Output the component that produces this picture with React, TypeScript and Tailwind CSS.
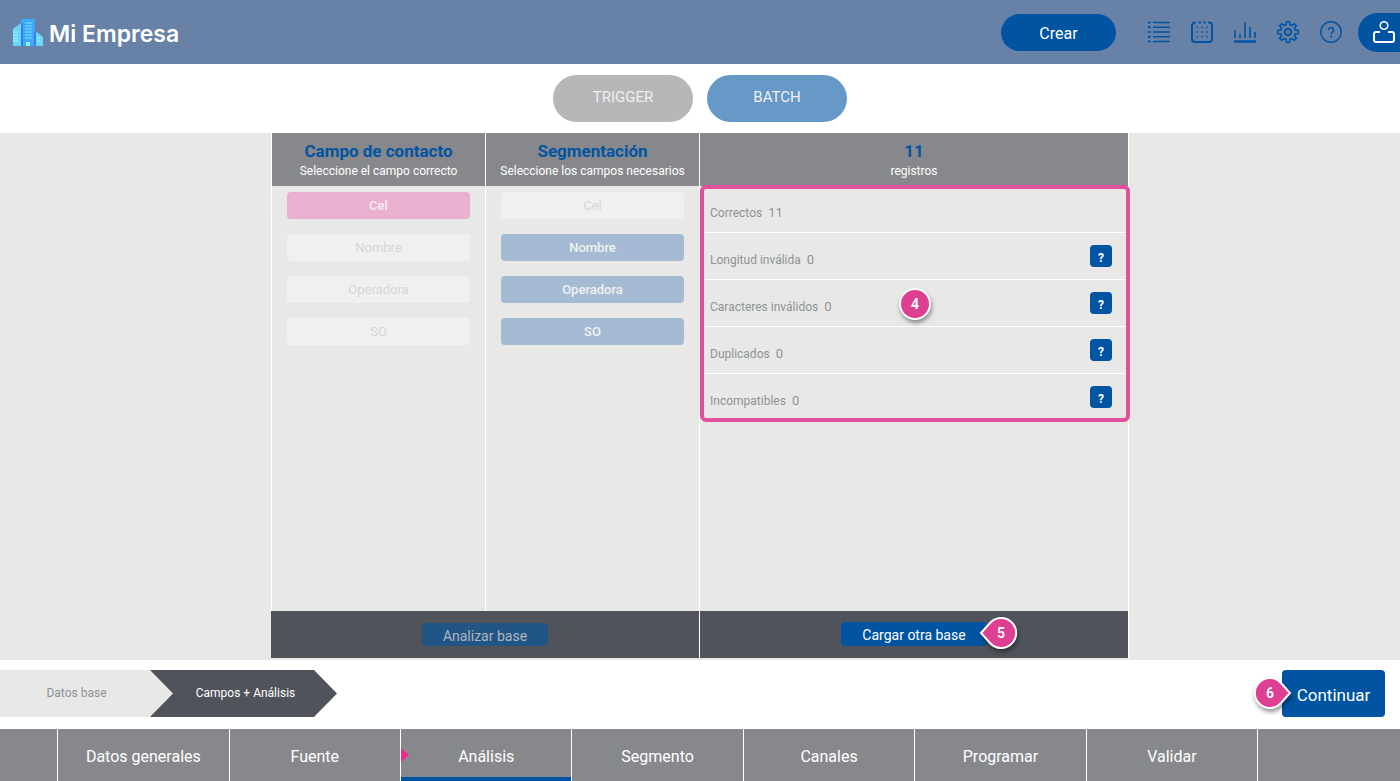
import { type ReactNode } from 'react'
import clsx from 'clsx'

const fields = ['Cel', 'Nombre', 'Operadora', 'SO']

const stats = [
  { label: 'Correctos', value: 11, help: false },
  { label: 'Longitud inválida', value: 0, help: true },
  { label: 'Caracteres inválidos', value: 0, help: true },
  { label: 'Duplicados', value: 0, help: true },
  { label: 'Incompatibles', value: 0, help: true },
]

const sections = ['Datos generales', 'Fuente', 'Análisis', 'Segmento', 'Canales', 'Programar', 'Validar']

function Logo() {
  return (
    <svg viewBox="0 0 30 27" className="w-[30px] h-[27px]" aria-hidden="true">
      <path d="M0 10 8 4v23H0z" fill="#6ad6fc" />
      <path d="M22 12l8 6v9h-8z" fill="#6ad6fc" />
      <path d="M8 0h14v27H8z" fill="#3fa9fb" />
      <path d="M8 4h2v23H8zM21 12h2v15h-2z" fill="#3b7df0" />
      <path d="M12 4h7M12 7h7M12 10h7M12 13h7M12 16h7M12 19h7" stroke="#74e2ff" />
      <path d="M0 13h5M0 16h5M0 19h5M0 22h5M24 19h3M24 22h3" stroke="#a8f0ff" />
      <path d="M13 23h4v4h-4z" fill="#8ff0ff" />
    </svg>
  )
}

function Icon({ children }: { children: ReactNode }) {
  return (
    <svg viewBox="0 0 22 22" className="w-[22px] h-[22px]" fill="none" stroke="currentColor" strokeWidth="1.4" aria-hidden="true">
      {children}
    </svg>
  )
}

function GearIcon() {
  const teeth = 8
  const points: string[] = []
  for (let i = 0; i < teeth; i++) {
    const a = (i * 360) / teeth
    const steps: [number, number][] = [[-13, 7.6], [-9, 10.4], [9, 10.4], [13, 7.6]]
    steps.forEach(([offset, r]) => {
      const rad = ((a + offset) * Math.PI) / 180
      points.push(`${(11 + r * Math.sin(rad)).toFixed(2)},${(11 - r * Math.cos(rad)).toFixed(2)}`)
    })
  }
  return (
    <Icon>
      <polygon points={points.join(' ')} strokeLinejoin="round" strokeWidth="1.6" />
      <circle cx="11" cy="11" r="3.2" strokeWidth="2" />
    </Icon>
  )
}

const tools = [
  {
    label: 'Lista',
    icon: (
      <Icon>
        <path d="M5 1.5h17M5 6.2h17M5 11h17M5 15.8h17M5 20.5h17" strokeWidth="1.6" />
        <path d="M0 1.5h2.5M0 6.2h2.5M0 11h2.5M0 15.8h2.5M0 20.5h2.5" strokeWidth="2.2" />
      </Icon>
    ),
  },
  {
    label: 'Calendario',
    icon: (
      <Icon>
        <path
          d="M5 1.5H4a3 3 0 0 0-3 3V18a3 3 0 0 0 3 3h14a3 3 0 0 0 3-3V4.5a3 3 0 0 0-3-3h-1M7.5 1.5h2.5M12.5 1.5H15"
          strokeWidth="2"
        />
        <path d="M5.5 6.5h12M5.5 11h12M5.5 15.5h12" strokeWidth="1.5" strokeDasharray="1.5 3.3" />
      </Icon>
    ),
  },
  {
    label: 'Reportes',
    icon: (
      <Icon>
        <path d="M1 9v8M6 13v4M11 1v16M16 6v11M21 11v6" strokeWidth="1.6" />
        <path d="M0 20.5h22" strokeWidth="2.4" />
      </Icon>
    ),
  },
  { label: 'Configuración', icon: <GearIcon /> },
  {
    label: 'Ayuda',
    icon: (
      <Icon>
        <circle cx="11" cy="11" r="10.2" />
        <path d="M8.5 9a2.5 2.5 0 1 1 3.8 2.100c-.9.6-1.300 1-1.300 2" strokeWidth="1.6" />
        <path d="M11 14.5v1.7" strokeWidth="1.7" />
      </Icon>
    ),
  },
]

interface MarkerProps {
  value: number
  point?: 'left' | 'right'
  className?: string
}

// Numbered callout, optionally with a tip towards the element it explains
function Marker({ value, point, className }: MarkerProps) {
  return (
    <svg
      viewBox="0 0 40 34"
      className={clsx('absolute w-[40px] h-[34px] overflow-visible drop-shadow-[1px_3px_2px_rgba(0,0,0,0.4)]', className)}
      role="img"
      aria-label={`Paso ${value}`}
    >
      {!point && <circle cx="20" cy="17" r="15" fill="#df3f93" stroke="#fff" strokeWidth="2" />}
      {point && (
        <path
          d="M2 17 11 7a15 15 0 1 1 0 20z"
          transform={point === 'right' ? 'rotate(180 20 17)' : undefined}
          fill="#df3f93"
          stroke="#fff"
          strokeWidth="2"
        />
      )}
      <text x={point === 'left' ? 22 : point === 'right' ? 18 : 20} y="22" textAnchor="middle" fill="#fff" className="text-sm font-bold">
        {value}
      </text>
    </svg>
  )
}

function ColumnHeader({ title, subtitle }: { title: string; subtitle: string }) {
  return (
    <header className="h-[53px] pt-2 bg-[#87888c] text-center">
      <h2 className="text-[17px] leading-5 font-bold text-[#0054a2]">{title}</h2>
      <p className="text-xs leading-5 text-white">{subtitle}</p>
    </header>
  )
}

interface FieldColumnProps {
  title: string
  subtitle: string
  selected: string[]
  color: string
}

function FieldColumn({ title, subtitle, selected, color }: FieldColumnProps) {
  return (
    <section className="border-l border-white">
      <ColumnHeader title={title} subtitle={subtitle} />
      <div className="flex flex-col gap-[15px] px-[15px] pt-[6px]">
        {fields.map((field) => (
          <button
            key={field}
            type="button"
            className={clsx(
              'h-[27px] pt-px rounded text-[13px]',
              selected.includes(field) ? `${color} text-[#f1f1f1] font-medium` : 'bg-[#f0f0ee] text-[#d5d6d7]'
            )}
          >
            {field}
          </button>
        ))}
      </div>
    </section>
  )
}

export default function App() {
  return (
    <div className="min-h-screen flex flex-col bg-white font-['Roboto','Liberation_Sans',sans-serif]">
      <header className="h-[64px] shrink-0 flex items-center bg-[#6782a6] pl-[13px]">
        <a href="#" className="flex items-center gap-[6px]">
          <Logo />
          <span className="pt-1 font-['Inter',sans-serif] text-[23px] leading-7 font-semibold text-white">Mi Empresa</span>
        </a>
        <button type="button" className="ml-auto w-[115px] h-[37px] pt-1 rounded-full bg-[#0054a2] text-base text-white">
          Crear
        </button>
        <div className="flex items-center gap-[21px] ml-8 text-[#0054a2]">
          {tools.map((tool) => (
            <button key={tool.label} type="button" aria-label={tool.label}>
              {tool.icon}
            </button>
          ))}
        </div>
        <button type="button" aria-label="Perfil" className="ml-4 w-[42px] h-[39px] pl-[15px] rounded-l-full bg-[#0054a2] text-white">
          <Icon>
            <circle cx="11" cy="4.5" r="3.8" strokeWidth="1.6" />
            <path d="M7 11H3a2 2 0 0 0-2 2v6a2 2 0 0 0 2 2h16a2 2 0 0 0 2-2v-6a2 2 0 0 0-2-2h-4" strokeWidth="2" />
          </Icon>
        </button>
      </header>

      <div className="h-[69px] shrink-0 flex items-center justify-center gap-[14px] text-[15px] text-[#f0f0f0]">
        <button type="button" className="w-[140px] h-[47px] pb-[2px] rounded-full bg-[#b5b7b9]">TRIGGER</button>
        <button type="button" className="w-[140px] h-[47px] pb-[2px] rounded-full bg-[#6698c8]">BATCH</button>
      </div>

      <main className="flex-1 flex bg-[#e8e9e7] px-4 pb-[2px]">
        <div className="w-full max-w-[858px] mx-auto grid grid-cols-[428fr_430fr]">
          <div className="flex flex-col">
            <div className="flex-1 grid grid-cols-2">
              <FieldColumn
                title="Campo de contacto"
                subtitle="Seleccione el campo correcto"
                selected={['Cel']}
                color="bg-[#ebafcf]"
              />
              <FieldColumn
                title="Segmentación"
                subtitle="Seleccione los campos necesarios"
                selected={['Nombre', 'Operadora', 'SO']}
                color="bg-[#a5bbd3]"
              />
            </div>
            <footer className="h-[47px] flex items-center justify-center bg-[#50535a]">
              <button type="button" disabled className="w-[126px] h-[23px] pt-[2px] rounded-sm bg-[#205586] text-sm text-[#b2b6bc]">
                Analizar base
              </button>
            </footer>
          </div>

          <section className="flex flex-col border-x border-white">
            <ColumnHeader title="11" subtitle="registros" />
            <div className="relative flex-1">
              <ul className="text-xs text-[#8e9296]">
                {stats.map((stat) => (
                  <li key={stat.label} className="h-[47px] flex items-center justify-between pl-[10px] pr-4 border-b border-white">
                    <span className="pt-2">
                      {stat.label}
                      <span className="ml-[6px] text-[13px]">{stat.value}</span>
                    </span>
                    {stat.help && (
                      <button
                        type="button"
                        aria-label={`Ayuda: ${stat.label}`}
                        className="size-[22px] pt-1 rounded bg-[#0054a2] text-xs leading-4 font-bold text-white"
                      >
                        ?
                      </button>
                    )}
                  </li>
                ))}
              </ul>
              <div className="absolute -top-px left-0 -right-[2px] h-[237px] rounded-md border-4 border-[#e0509b] pointer-events-none" />
              <Marker value={4} className="left-[195px] top-[101px]" />
            </div>
            <footer className="h-[47px] flex items-center justify-center bg-[#50535a]">
              <div className="relative">
                <button type="button" className="w-[146px] h-6 pt-[2px] rounded-sm bg-[#0054a2] text-sm text-white">
                  Cargar otra base
                </button>
                <Marker value={5} point="left" className="left-[138px] -top-[6px]" />
              </div>
            </footer>
          </section>
        </div>
      </main>

      <div className="h-[69px] shrink-0 flex items-center justify-between pr-[15px] pb-[2px]">
        <ol className="flex text-xs leading-[47px] text-center">
          <li className="w-[173px] pr-5 bg-[#e8e9e7] text-[#8e9296]">Datos base</li>
          <li className="w-[187px] -ml-[23px] pl-1 bg-[#50535a] text-white [clip-path:polygon(0_0,calc(100%-23px)_0,100%_50%,calc(100%-23px)_100%,0_100%,23px_50%)]">
            Campos + Análisis
          </li>
        </ol>
        <div className="relative">
          <button type="button" className="w-[103px] h-[47px] pt-1 rounded bg-[#0054a2] text-[17px] text-white">
            Continuar
          </button>
          <Marker value={6} point="right" className="-left-[30px] top-[6px]" />
        </div>
      </div>

      <nav className="h-[52px] shrink-0 grid grid-cols-[2fr_repeat(7,6fr)_5fr] bg-[#87888c] text-base text-white">
        <span />
        {sections.map((section) => (
          <a
            key={section}
            href="#"
            className={clsx(
              'relative flex items-center justify-center pt-1 border-l border-white',
              section === 'Análisis' && 'shadow-[inset_0_-4px_0_#0054a2]'
            )}
          >
            {section === 'Análisis' && (
              <span className="absolute left-0 top-[19px] border-y-[7px] border-l-[8px] border-y-transparent border-l-[#ee2a8f]" />
            )}
            {section}
          </a>
        ))}
        <span className="border-l border-white" />
      </nav>
    </div>
  )
}
